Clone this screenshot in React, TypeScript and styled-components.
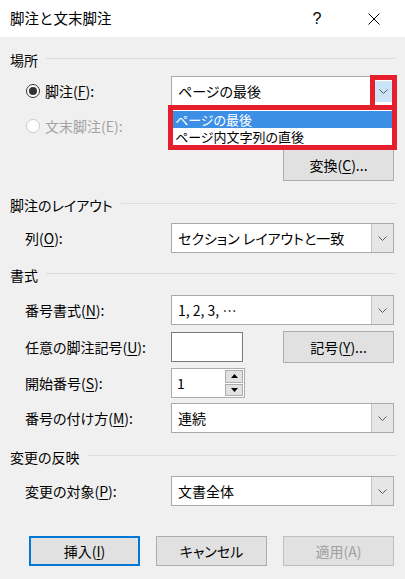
import React from 'react'
import styled, { createGlobalStyle } from 'styled-components'

const GlobalStyle = createGlobalStyle`
  html, body {
    margin: 0;
    padding: 0;
    background: #f0f0f0;
  }
  body {
    font-family: "Noto Sans CJK JP", "Noto Sans", sans-serif;
    font-size: 14px;
    font-feature-settings: "palt";
    color: #000;
  }
  #root {
    width: 405px;
    height: 579px;
    overflow: hidden;
  }
`

const Dialog = styled.div`
  width: 405px;
  height: 579px;
  background: #f0f0f0;
  display: flex;
  flex-direction: column;
`

const TitleBar = styled.div`
  height: 37px;
  background: #fff;
  display: flex;
  align-items: center;
  gap: 11px;
  padding: 0 8px 0 10px;
  flex-shrink: 0;
`

const Title = styled.div`
  flex: 1;
  font-size: 14.5px;
  line-height: 1;
  font-feature-settings: normal;
`

const TitleButton = styled.div`
  width: 46px;
  height: 37px;
  display: flex;
  align-items: center;
  justify-content: center;
  font-family: "Liberation Sans", sans-serif;
  font-size: 16px;
`

const Body = styled.div`
  padding: 0 11px 0 10px;
  display: flex;
  flex-direction: column;
`

const GroupHeader = styled.div<{ $mt: number }>`
  margin-top: ${(p) => p.$mt}px;
  height: 22px;
  display: flex;
  align-items: center;
  gap: 8px;
  font-size: 14px;
  &::after {
    content: '';
    flex: 1;
    height: 1px;
    margin-top: -3px;
    margin-right: -2px;
    background: #dcdcdc;
  }
`

const Row = styled.div<{ $mt: number; $h?: number }>`
  margin-top: ${(p) => p.$mt}px;
  height: ${(p) => p.$h ?? 30}px;
  padding-left: 15px;
  display: grid;
  grid-template-columns: 146px 1fr;
  align-items: center;
`

const Label = styled.div<{ $disabled?: boolean }>`
  font-size: 14px;
  color: ${(p) => (p.$disabled ? '#a3a3a3' : '#000')};
  white-space: nowrap;
  display: flex;
  align-items: center;
`

const Key = styled.span`
  text-decoration: underline;
  text-underline-offset: 2px;
`

const Radio = styled.span<{ $checked?: boolean; $disabled?: boolean }>`
  width: 12px;
  height: 12px;
  border-radius: 50%;
  border: 1px solid ${(p) => (p.$disabled ? '#cccccc' : '#333')};
  background: #fff;
  margin: 0 5px 0 1px;
  display: flex;
  align-items: center;
  justify-content: center;
  &::after {
    content: '';
    display: ${(p) => (p.$checked ? 'block' : 'none')};
    width: 8px;
    height: 8px;
    border-radius: 50%;
    background: #333;
  }
`

const ControlCell = styled.div`
  position: relative;
  height: 100%;
  display: flex;
  align-items: center;
  justify-content: space-between;
`

const Combo = styled.div`
  box-sizing: border-box;
  width: 100%;
  height: 30px;
  background: #fff;
  border: 1px solid #a9a9a9;
  display: flex;
  align-items: stretch;
`

const ComboText = styled.div`
  flex: 1;
  padding-left: 6px;
  display: flex;
  align-items: center;
  font-size: 14px;
  white-space: nowrap;
`

const ComboButton = styled.div`
  width: 21px;
  background: #e6e6e6;
  border-left: 1px solid #c4c4c4;
  display: flex;
  align-items: center;
  justify-content: center;
`

const TextBox = styled.div<{ $w: number }>`
  box-sizing: border-box;
  width: ${(p) => p.$w}px;
  height: 30px;
  background: #fff;
  border: 1px solid #7a7a7a;
  display: flex;
  align-items: center;
  padding-left: 5px;
  font-size: 14px;
`

const Spinner = styled.div`
  box-sizing: border-box;
  width: 74px;
  height: 30px;
  background: #fff;
  border: 1px solid #ababab;
  display: flex;
  align-items: center;
  padding: 1px 1px 1px 5px;
`

const SpinValue = styled.div`
  flex: 1;
  font-size: 14px;
`

const SpinButtons = styled.div`
  width: 18px;
  height: 100%;
  display: flex;
  flex-direction: column;
  gap: 1px;
`

const SpinButton = styled.div`
  flex: 1;
  background: #e1e1e1;
  border: 1px solid #adadad;
  display: flex;
  align-items: center;
  justify-content: center;
`

const PushButton = styled.div<{ $default?: boolean; $disabled?: boolean; $h?: number }>`
  box-sizing: border-box;
  width: 111px;
  height: ${(p) => p.$h ?? 30}px;
  background: #e1e1e1;
  border: ${(p) => (p.$default ? '2px solid #0078d7' : `1px solid ${p.$disabled ? '#bfbfbf' : '#adadad'}`)};
  color: ${(p) => (p.$disabled ? '#a0a0a0' : '#000')};
  display: flex;
  align-items: center;
  justify-content: center;
  font-size: 14px;
  white-space: nowrap;
`

const ButtonRow = styled.div<{ $mt: number; $h: number }>`
  margin-top: ${(p) => p.$mt}px;
  height: ${(p) => p.$h}px;
  display: flex;
  justify-content: flex-end;
  gap: 16px;
`

const RedFrame = styled.div`
  position: absolute;
  box-sizing: border-box;
  border: 5px solid #e5202c;
`

const ButtonMark = styled(RedFrame)`
  left: 199px;
  top: -1px;
  width: 27px;
  height: 30px;
  border-bottom: none;
  display: flex;
  justify-content: center;
  padding-top: 1px;
`

const MarkInner = styled.div`
  width: 17px;
  height: 21px;
  background: #cce4f7;
  display: flex;
  align-items: center;
  justify-content: center;
`

const DropList = styled(RedFrame)`
  left: -3px;
  top: 29px;
  width: 229px;
  height: 45px;
  background: #fff;
  padding: 1px 0 0 0;
  z-index: 2;
`

const ListItem = styled.div<{ $selected?: boolean }>`
  height: 17px;
  line-height: 17px;
  padding-left: 2px;
  font-size: 13px;
  white-space: nowrap;
  background: ${(p) => (p.$selected ? '#3d8fe6' : 'transparent')};
  color: ${(p) => (p.$selected ? '#fff' : '#000')};
`

const Chevron = () => (
  <svg width="9" height="5" viewBox="0 0 9 5">
    <path d="M0.5 0.5 L4.5 4.5 L8.5 0.5" fill="none" stroke="#5a5a5a" strokeWidth="1" />
  </svg>
)

const Triangle = ({ up }: { up?: boolean }) => (
  <svg width="7" height="4" viewBox="0 0 7 4">
    <path d={up ? 'M0 4 L3.5 0 L7 4 Z' : 'M0 0 L3.5 4 L7 0 Z'} fill="#000" />
  </svg>
)

const CloseIcon = () => (
  <svg width="12" height="12" viewBox="0 0 12 12">
    <path d="M0.5 0.5 L11.5 11.5 M11.5 0.5 L0.5 11.5" stroke="#000" strokeWidth="1" />
  </svg>
)

function ComboBox({ value }: { value: string }) {
  return (
    <Combo>
      <ComboText>{value}</ComboText>
      <ComboButton>
        <Chevron />
      </ComboButton>
    </Combo>
  )
}

export default function App() {
  return (
    <Dialog>
      <GlobalStyle />
      <TitleBar>
        <Title>脚注と文末脚注</Title>
        <TitleButton>?</TitleButton>
        <TitleButton>
          <CloseIcon />
        </TitleButton>
      </TitleBar>
      <Body>
        <GroupHeader $mt={12}>場所</GroupHeader>
        <Row $mt={5}>
          <Label>
            <Radio $checked />
            脚注(<Key>F</Key>):
          </Label>
          <ControlCell>
            <Combo>
              <ComboText>ページの最後</ComboText>
            </Combo>
            <ButtonMark>
              <MarkInner>
                <Chevron />
              </MarkInner>
            </ButtonMark>
            <DropList>
              <ListItem $selected>ページの最後</ListItem>
              <ListItem>ページ内文字列の直後</ListItem>
            </DropList>
          </ControlCell>
        </Row>
        <Row $mt={5}>
          <Label $disabled>
            <Radio $disabled />
            文末脚注(E):
          </Label>
          <ControlCell />
        </Row>
        <ButtonRow $mt={7} $h={33}>
          <PushButton $h={33}>
            変換(<Key>C</Key>)...
          </PushButton>
        </ButtonRow>

        <GroupHeader $mt={13}>脚注のレイアウト</GroupHeader>
        <Row $mt={7}>
          <Label>
            列(<Key>O</Key>):
          </Label>
          <ControlCell>
            <ComboBox value="セクション レイアウトと一致" />
          </ControlCell>
        </Row>

        <GroupHeader $mt={11}>書式</GroupHeader>
        <Row $mt={9}>
          <Label>
            番号書式(<Key>N</Key>):
          </Label>
          <ControlCell>
            <ComboBox value="1, 2, 3, …" />
          </ControlCell>
        </Row>
        <Row $mt={6} $h={32}>
          <Label>
            任意の脚注記号(<Key>U</Key>):
          </Label>
          <ControlCell>
            <TextBox $w={72} />
            <PushButton $h={32}>
              記号(<Key>Y</Key>)...
            </PushButton>
          </ControlCell>
        </Row>
        <Row $mt={5}>
          <Label>
            開始番号(<Key>S</Key>):
          </Label>
          <ControlCell>
            <Spinner>
              <SpinValue>1</SpinValue>
              <SpinButtons>
                <SpinButton>
                  <Triangle up />
                </SpinButton>
                <SpinButton>
                  <Triangle />
                </SpinButton>
              </SpinButtons>
            </Spinner>
          </ControlCell>
        </Row>
        <Row $mt={5}>
          <Label>
            番号の付け方(<Key>M</Key>):
          </Label>
          <ControlCell>
            <ComboBox value="連続" />
          </ControlCell>
        </Row>

        <GroupHeader $mt={13}>変更の反映</GroupHeader>
        <Row $mt={8}>
          <Label>
            変更の対象(<Key>P</Key>):
          </Label>
          <ControlCell>
            <ComboBox value="文書全体" />
          </ControlCell>
        </Row>

        <ButtonRow $mt={30} $h={30}>
          <PushButton $default>
            挿入(<Key>I</Key>)
          </PushButton>
          <PushButton>キャンセル</PushButton>
          <PushButton $disabled>適用(A)</PushButton>
        </ButtonRow>
      </Body>
    </Dialog>
  )
}
